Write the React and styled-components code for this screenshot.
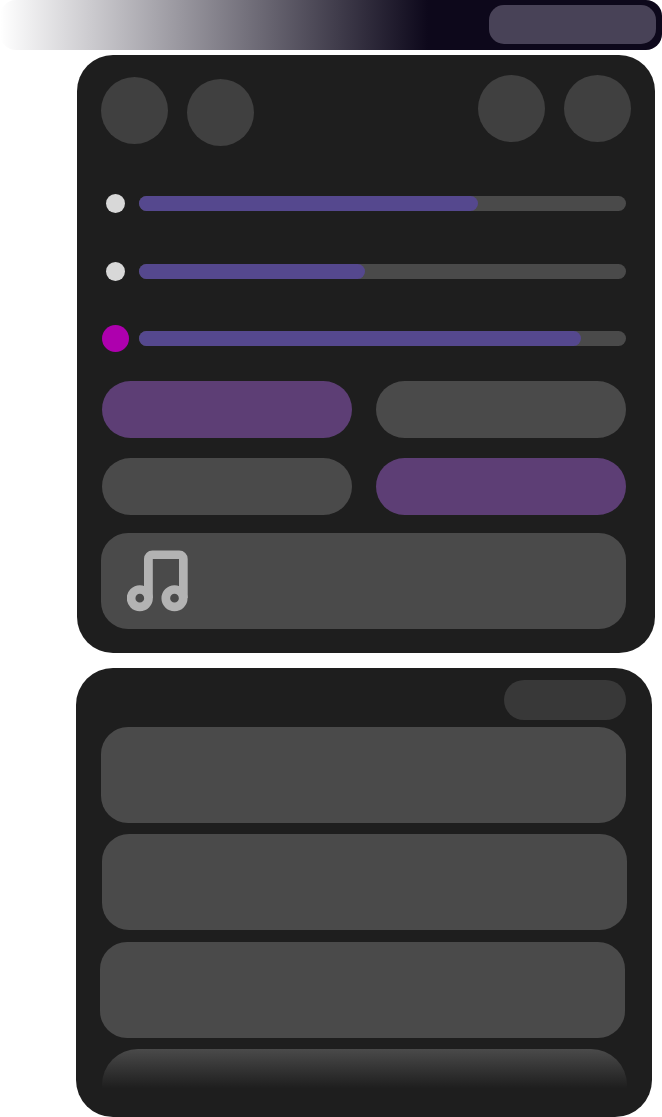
import React from 'react';
import styled, { createGlobalStyle } from 'styled-components';

const GlobalStyle = createGlobalStyle`
  * { box-sizing: border-box; }
  body { margin: 0; background: #fff; overflow: hidden; }
`;

const Screen = styled.main`
  width: 662px;
  height: 1117px;
  display: flex;
  flex-direction: column;
`;

const StatusBar = styled.header`
  height: 50px;
  flex: none;
  display: flex;
  justify-content: flex-end;
  padding: 5px 6px 6px 0;
  border-radius: 16px;
  background: linear-gradient(90deg, rgba(13, 8, 27, 0) 0, #0d081b 428px);
`;

const StatusPill = styled.div`
  width: 167px;
  height: 39px;
  border-radius: 15px;
  background: #484257;
`;

const Panel = styled.section`
  flex: none;
  display: flex;
  flex-direction: column;
  background: #1e1e1e;
`;

const ControlPanel = styled(Panel)`
  width: 578px;
  height: 598px;
  margin: 5px 0 0 77px;
  padding: 19px 24px 24px;
  border-radius: 36px;
`;

const ActionRow = styled.div`
  display: flex;
  height: 71px;
`;

const RoundAction = styled.div`
  width: 67px;
  height: 67px;
  border-radius: 50%;
  background: #404040;
  margin: ${({ $top }) => $top}px 0 0 ${({ $left }) => $left}px;
`;

const Sliders = styled.div`
  display: grid;
  grid-template-rows: 69px 66px 69px;
  margin-top: 24px;
`;

const SliderRow = styled.div`
  display: grid;
  grid-template-columns: 28px 487px;
  column-gap: 10px;
  align-items: center;
`;

const Dot = styled.span`
  justify-self: center;
  width: ${({ $size }) => $size}px;
  height: ${({ $size }) => $size}px;
  border-radius: 50%;
  background: ${({ $color }) => $color};
`;

const Track = styled.div`
  height: 15px;
  border-radius: 8px;
  background: #4a4a4a;
`;

const Fill = styled.div`
  height: 100%;
  border-radius: 8px;
  background: #55488e;
`;

const Toggles = styled.div`
  display: grid;
  grid-template-columns: 250px 250px;
  grid-auto-rows: 57px;
  gap: 20px 24px;
  margin: 8px 0 0 1px;
`;

const Toggle = styled.div`
  border-radius: 29px;
  background: ${({ $on }) => ($on ? '#5d3e75' : '#4a4a4a')};
`;

const Card = styled.div`
  width: 525px;
  height: ${({ $height = 96 }) => $height}px;
  flex: none;
  margin-left: ${({ $left = 0 }) => $left}px;
  border-radius: 27px;
  background: #4a4a4a;
`;

const MediaCard = styled(Card)`
  display: flex;
  margin-top: 18px;
  padding: 17px 26px;
`;

const FadingCard = styled(Card)`
  border-radius: 36px 36px 0 0;
  background: linear-gradient(#4a4a4a, #1e1e1e 98%);
`;

const NotificationPanel = styled(Panel)`
  width: 576px;
  height: 449px;
  margin: 15px 0 0 75.5px;
  padding: 12px 24px 0;
  border-radius: 37px;
`;

const ClearPill = styled.div`
  width: 122px;
  height: 40px;
  flex: none;
  margin: 0 1.5px 7px auto;
  border-radius: 20px;
  background: #383838;
`;

const CardList = styled.div`
  display: grid;
  row-gap: 12px;
  grid-template-rows: 95.4px 95.4px 95.4px 39.5px;
  padding-left: 0.5px;
`;

const MusicIcon = () => (
  <svg width="61" height="62" viewBox="0 0 61 62" fill="#b3b3b3" aria-hidden="true">
    <path d="M17 48V8.9A8.4 8.4 0 0 1 25.4.5H52.3a8.4 8.4 0 0 1 8.4 8.4V48H52V9.1H25.8V48Z" />
    <g fill="none" stroke="#b3b3b3" strokeWidth="8.7">
      <circle cx="12.8" cy="48.2" r="8.7" />
      <circle cx="47.5" cy="48.2" r="8.7" />
    </g>
  </svg>
);

const actions = [
  { left: 0, top: 2.5 },
  { left: 18.5, top: 4.5 },
  { left: 224.5, top: 0.5 },
  { left: 18.5, top: 0.5 },
];

const levels = [
  { value: 339, size: 19, color: '#d8d8d8' },
  { value: 226, size: 19, color: '#d8d8d8' },
  { value: 442, size: 27, color: '#ae00ae' },
];

export default function App() {
  return (
    <>
      <GlobalStyle />
      <Screen>
        <StatusBar>
          <StatusPill />
        </StatusBar>
        <ControlPanel>
          <ActionRow>
            {actions.map((a, i) => (
              <RoundAction key={i} $left={a.left} $top={a.top} />
            ))}
          </ActionRow>
          <Sliders>
            {levels.map((l, i) => (
              <SliderRow key={i}>
                <Dot $size={l.size} $color={l.color} />
                <Track>
                  <Fill style={{ width: `${(l.value / 487) * 100}%` }} />
                </Track>
              </SliderRow>
            ))}
          </Sliders>
          <Toggles>
            <Toggle $on />
            <Toggle />
            <Toggle />
            <Toggle $on />
          </Toggles>
          <MediaCard>
            <MusicIcon />
          </MediaCard>
        </ControlPanel>
        <NotificationPanel>
          <ClearPill />
          <CardList>
            <Card $left={1} />
            <Card $left={2} />
            <Card />
            <FadingCard $left={2} $height={39.5} />
          </CardList>
        </NotificationPanel>
      </Screen>
    </>
  );
}
